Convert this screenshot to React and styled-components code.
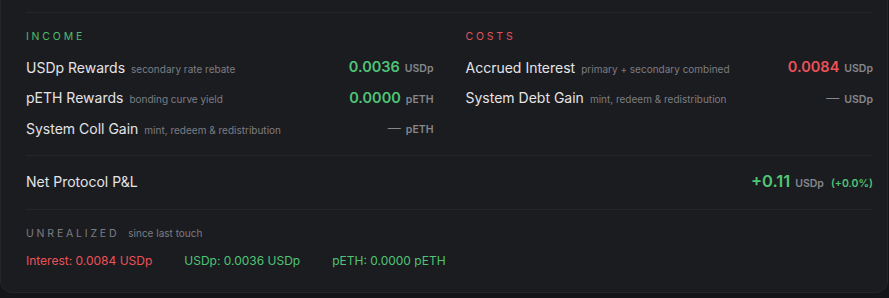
import React from 'react';
import styled, { createGlobalStyle } from 'styled-components';

const Global = createGlobalStyle`
  body {
    margin: 0;
    background: #141518;
    font-family: Inter, "Noto Sans", sans-serif;
    overflow: hidden;
  }
`

const Card = styled.div`
  box-sizing: border-box;
  width: 888px;
  margin-top: -30px;
  padding: 41px 14px 0 25px;
  background: #1b1c20;
  border: 1px solid #25262b;
  border-radius: 12px;
`

const Columns = styled.div`
  display: grid;
  grid-template-columns: 1fr 1fr;
  column-gap: 32px;
  border-top: 1px solid #25262b;
  padding: 17px 0 10px;
`

const Heading = styled.div`
  font-size: 10.5px;
  line-height: 14px;
  letter-spacing: 2.8px;
  text-transform: uppercase;
  color: ${(p) => p.color};
  margin-bottom: ${(p) => (p.$flush ? 0 : 9)}px;
`

const Row = styled.div`
  display: flex;
  align-items: center;
  justify-content: space-between;
  height: 30.5px;
  line-height: 20px;
`

const Name = styled.span`
  font-size: 14px;
  color: #e4e4e7;
`

const Sub = styled.span`
  font-size: 10px;
  color: #7b7d83;
  margin-left: 6px;
`

const Amount = styled.span`
  display: flex;
  align-items: baseline;
`

const Value = styled.span`
  font-size: ${(p) => p.size || 14.5}px;
  font-weight: 600;
  color: ${(p) => p.color};
`

const Unit = styled.span`
  font-size: ${(p) => p.size || 10.5}px;
  font-weight: 600;
  color: #85878d;
  margin-left: 5px;
`

const Dash = styled.span`
  font-size: 13px;
  color: #85878d;
`

const NetRow = styled.div`
  display: flex;
  align-items: center;
  justify-content: space-between;
  height: 53px;
  border-top: 1px solid #25262b;
  border-bottom: 1px solid #25262b;
  line-height: 24px;
`

const Pct = styled.span`
  font-size: 10.5px;
  font-weight: 600;
  color: #4fc476;
  margin-left: 7px;
`

const Unrealized = styled.div`
  padding: 16px 0 23px;
`

const UHead = styled.div`
  display: flex;
  align-items: baseline;
  gap: 9px;
  line-height: 14px;
  margin-bottom: 12px;
`

const Faint = styled.span`
  font-size: 10px;
  color: #7b7d83;
`

const UItems = styled.div`
  display: flex;
  gap: 32px;
  font-size: 12px;
  line-height: 16px;
`

const UItem = styled.span`
  color: ${(p) => p.color};
`

const GREEN = '#4fc476'
const RED = '#ec5258'

const income = [
  { name: 'USDp Rewards', sub: 'secondary rate rebate', value: '0.0036', unit: 'USDp' },
  { name: 'pETH Rewards', sub: 'bonding curve yield', value: '0.0000', unit: 'pETH' },
  { name: 'System Coll Gain', sub: 'mint, redeem & redistribution', value: null, unit: 'pETH' },
]

const costs = [
  { name: 'Accrued Interest', sub: 'primary + secondary combined', value: '0.0084', unit: 'USDp' },
  { name: 'System Debt Gain', sub: 'mint, redeem & redistribution', value: null, unit: 'USDp' },
]

const Line = ({ name, sub, value, unit, color }) => (
  <Row>
    <Amount>
      <Name>{name}</Name>
      <Sub>{sub}</Sub>
    </Amount>
    <Amount>
      {value ? <Value color={color}>{value}</Value> : <Dash>—</Dash>}
      <Unit>{unit}</Unit>
    </Amount>
  </Row>
)

export default function App() {
  return (
    <>
      <Global />
      <Card>
        <Columns>
          <div>
            <Heading color="#4cbd6e">Income</Heading>
            {income.map((r) => <Line key={r.name} {...r} color={GREEN} />)}
          </div>
          <div>
            <Heading color="#e0535a">Costs</Heading>
            {costs.map((r) => <Line key={r.name} {...r} color={RED} />)}
          </div>
        </Columns>
        <NetRow>
          <Name>Net Protocol P&amp;L</Name>
          <Amount>
            <Value size={16.5} color={GREEN}>+0.11</Value>
            <Unit size={10.5}>USDp</Unit>
            <Pct>(+0.0%)</Pct>
          </Amount>
        </NetRow>
        <Unrealized>
          <UHead>
            <Heading color="#7b7d83" as="span" $flush>Unrealized</Heading>
            <Faint>since last touch</Faint>
          </UHead>
          <UItems>
            <UItem color={RED}>Interest: 0.0084 USDp</UItem>
            <UItem color={GREEN}>USDp: 0.0036 USDp</UItem>
            <UItem color={GREEN}>pETH: 0.0000 pETH</UItem>
          </UItems>
        </Unrealized>
      </Card>
    </>
  )
}
